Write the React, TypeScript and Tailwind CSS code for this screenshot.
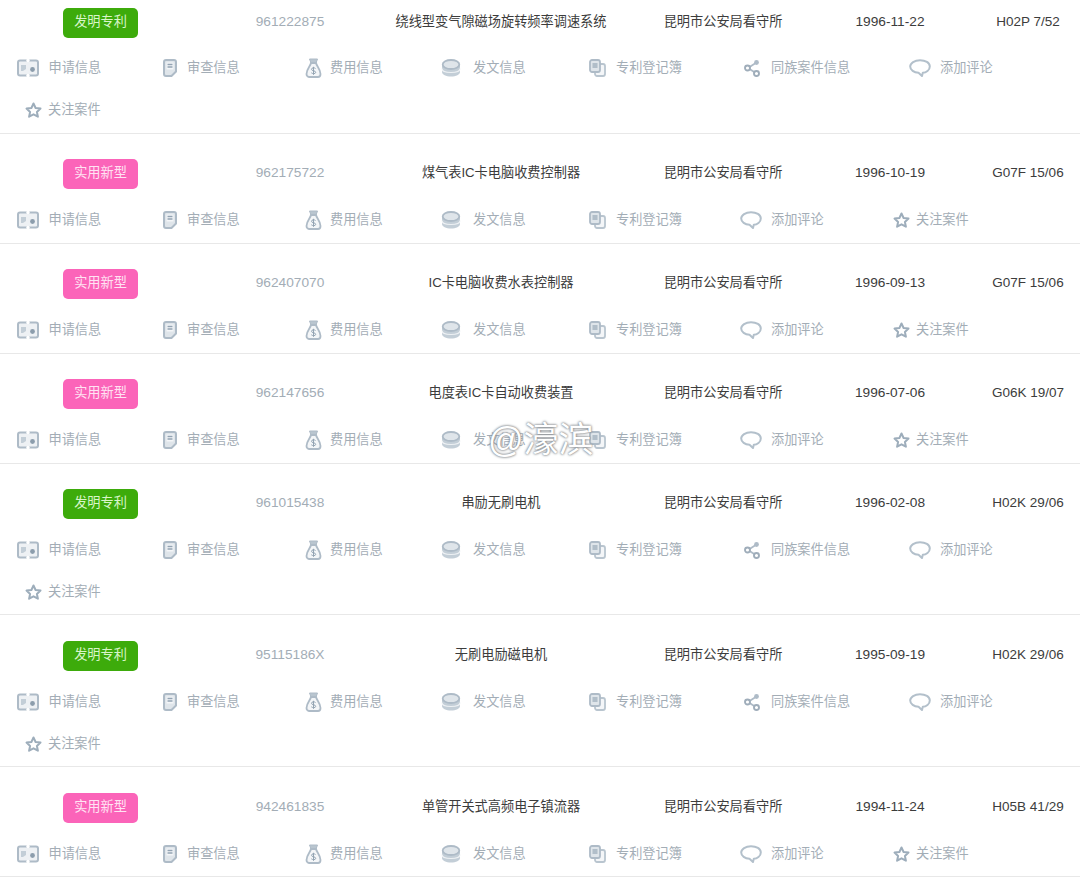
const FONT = "font-['Liberation_Sans','Noto_Sans_CJK_SC',sans-serif]";

type Patent = {
  type: "invention" | "utility";
  no: string;
  title: string;
  date: string;
  cls: string;
  pad: string;
};

const patents: Patent[] = [
  { type: "invention", no: "961222875", title: "绕线型变气隙磁场旋转频率调速系统", date: "1996-11-22", cls: "H02P 7/52", pad: "pt-2 pb-[2px]" },
  { type: "utility", no: "962175722", title: "煤气表IC卡电脑收费控制器", date: "1996-10-19", cls: "G07F 15/06", pad: "pt-[25px] pb-[2px]" },
  { type: "utility", no: "962407070", title: "IC卡电脑收费水表控制器", date: "1996-09-13", cls: "G07F 15/06", pad: "pt-[25px] pb-[2px]" },
  { type: "utility", no: "962147656", title: "电度表IC卡自动收费装置", date: "1996-07-06", cls: "G06K 19/07", pad: "pt-[25px] pb-[2px]" },
  { type: "invention", no: "961015438", title: "串励无刷电机", date: "1996-02-08", cls: "H02K 29/06", pad: "pt-[25px] pb-[1px]" },
  { type: "invention", no: "95115186X", title: "无刷电励磁电机", date: "1995-09-19", cls: "H02K 29/06", pad: "pt-[26px] pb-[1px]" },
  { type: "utility", no: "942461835", title: "单管开关式高频电子镇流器", date: "1994-11-24", cls: "H05B 41/29", pad: "pt-[26px] pb-[1px]" },
];

function AppIcon() {
  return (
    <svg width="22" height="18" viewBox="0 0 22 18">
      <rect x="1" y="1.500" width="20" height="15" rx="2" fill="#eef1f4" stroke="#aebbc7" strokeWidth="2" />
      <circle cx="11" cy="1.500" r="1.700" fill="#fff" />
      <circle cx="11" cy="16.500" r="1.700" fill="#fff" />
      <path d="M4 6h5v4l-3 2H4z" fill="#c3ced7" />
      <circle cx="15.500" cy="10.500" r="2.400" fill="#8c9dac" />
    </svg>
  );
}

function ReviewIcon() {
  return (
    <svg width="14" height="18" viewBox="0 0 14 18">
      <path d="M3 1h8a2 2 0 0 1 2 2v9.500L8.500 17H3a2 2 0 0 1-2-2V3a2 2 0 0 1 2-2z" fill="#dfe5ea" stroke="#aebbc7" strokeWidth="2" />
      <rect x="3.500" y="3.500" width="7" height="7" fill="#f4f6f8" />
      <path d="M4.500 5.500h5M4.500 8h5" stroke="#93a4b3" strokeWidth="1.300" />
    </svg>
  );
}

function FeeIcon() {
  return (
    <svg width="17" height="20" viewBox="0 0 17 20">
      <path d="M4.500 1h8L11 5H6z" fill="#b9c5cf" stroke="#aebbc7" />
      <path d="M6 5h5c.5 3 4.500 6 4.500 11 0 1.500-1 3-2.500 3H4c-1.500 0-2.500-1.500-2.500-3C1.500 11 5.500 8 6 5z" fill="#f4f6f8" stroke="#aebbc7" strokeWidth="1.800" />
      <path d="M10.500 10.500c-1-1-4-1-4 .8 0 2 4.200 1 4.200 3 0 1.700-3.200 1.700-4.400.5M8.500 8.800v8" fill="none" stroke="#93a4b3" strokeWidth="1" />
    </svg>
  );
}

function StackIcon() {
  return (
    <svg width="20" height="18" viewBox="0 0 20 18">
      <path d="M1 5v8c0 2.500 4 4.500 9 4.500s9-2 9-4.500V5z" fill="#c3ced7" />
      <path d="M1 9.500c0 2.500 4 4 9 4s9-1.500 9-4" fill="none" stroke="#eef1f4" strokeWidth="1.200" />
      <ellipse cx="10" cy="5.500" rx="8.300" ry="4.500" fill="#dfe5ea" stroke="#aebbc7" strokeWidth="1.800" />
    </svg>
  );
}

function RegisterIcon() {
  return (
    <svg width="17" height="18" viewBox="0 0 17 18">
      <rect x="6" y="5" width="10" height="12" rx="2" fill="#f4f6f8" stroke="#b9c5cf" strokeWidth="1.800" />
      <rect x="1" y="1" width="10" height="12" rx="2" fill="#dfe5ea" stroke="#aebbc7" strokeWidth="1.800" />
      <rect x="3.500" y="4" width="5" height="5" fill="#93a4b3" opacity="0.6" />
    </svg>
  );
}

function ShareIcon() {
  return (
    <svg width="16" height="18" viewBox="0 0 16 18">
      <path d="M12.500 3.500 4 9l8.500 5.500" fill="none" stroke="#aebbc7" strokeWidth="1.800" />
      <circle cx="12.500" cy="3.500" r="2.400" fill="#aebbc7" />
      <circle cx="3.500" cy="9" r="2.500" fill="#fff" stroke="#9fadba" strokeWidth="1.900" />
      <circle cx="12.500" cy="14.500" r="2.500" fill="#fff" stroke="#9fadba" strokeWidth="1.900" />
    </svg>
  );
}

function CommentIcon() {
  return (
    <svg width="22" height="18" viewBox="0 0 22 18">
      <path d="M11 1.200c5.400 0 9.800 2.600 9.800 6.300s-3.800 6.200-7 6.300L13 17l-3.500-3.300C5 13.500 1.200 11 1.200 7.500S5.600 1.200 11 1.200z" fill="#fff" stroke="#b3c0cb" strokeWidth="2" strokeLinejoin="round" />
    </svg>
  );
}

function StarIcon() {
  return (
    <svg width="17" height="17" viewBox="0 0 17 17">
      <path d="M8.500 1.500 10.600 6l4.900.6-3.600 3.300 1 4.800-4.400-2.400-4.400 2.400 1-4.800L1.500 6.600 6.400 6z" fill="#fff" stroke="#9dadbb" strokeWidth="2" strokeLinejoin="round" />
    </svg>
  );
}

function Action({ icon, label, slot, className }: { icon: React.ReactNode; label: string; slot: string; className: string }) {
  return (
    <div className={`flex h-[42px] shrink-0 items-center text-[13.2px] text-[#a3adb6] ${className}`}>
      <span className={`flex shrink-0 items-center ${slot}`}>{icon}</span>
      <span>{label}</span>
    </div>
  );
}

function Row({ item, index }: { item: Patent; index: number }) {
  const isInvention = item.type === "invention";
  return (
    <div className={`border-b border-[#e8e8e8] ${item.pad}`}>
      <div className="flex h-[30px] items-start text-center leading-[28px] text-[#3c3c3c]">
        <div className="flex w-[200px] shrink-0 justify-center pl-[1px]">
          <span className={`flex h-[30px] w-[75px] items-center justify-center rounded-[5px] pb-[3px] text-[13.2px] leading-none ${isInvention ? "bg-[#3dab0b] text-[#d9f5c9]" : "bg-[#fb64b9] text-[#ffe3f3]"}`}>
            {isInvention ? "发明专利" : "实用新型"}
          </span>
        </div>
        <div className="w-[180px] shrink-0 text-[13.7px] text-[#a3adb6]">{item.no}</div>
        <div className="w-[242px] shrink-0 text-[13.2px]">{item.title}</div>
        <div className="w-[202px] shrink-0 text-[13.2px]">昆明市公安局看守所</div>
        <div className="w-[132px] shrink-0 text-[13.7px]">{item.date}</div>
        <div className="ml-5 w-[104px] shrink-0 text-[13.5px]">{item.cls}</div>
      </div>
      <div className={`flex flex-wrap pl-[17px] ${index === 0 ? "mt-[9px]" : "mt-[10px]"}`}>
        <Action icon={<AppIcon />} label="申请信息" slot="w-[31.500px]" className="w-[146px]" />
        <Action icon={<ReviewIcon />} label="审查信息" slot="w-[24px]" className="w-[142px]" />
        <Action icon={<FeeIcon />} label="费用信息" slot="w-[25px]" className="w-[136px]" />
        <Action icon={<StackIcon />} label="发文信息" slot="w-[32px]" className="w-[148px]" />
        <Action icon={<RegisterIcon />} label="专利登记簿" slot="w-[27px]" className={isInvention ? "w-[155px]" : "w-[151px]"} />
        {isInvention && <Action icon={<ShareIcon />} label="同族案件信息" slot="w-[27px]" className="w-[165px]" />}
        <Action icon={<CommentIcon />} label="添加评论" slot="w-[31px]" className="w-[145px]" />
        <Action icon={<StarIcon />} label="关注案件" slot="w-[23px]" className="w-[85px] pl-[8px]" />
      </div>
    </div>
  );
}

export default function App() {
  return (
    <div className={`relative h-[884px] w-[1080px] overflow-hidden bg-white ${FONT}`}>
      {patents.map((item, index) => (
        <Row key={item.no} item={item} index={index} />
      ))}
      <div className="absolute left-[488px] top-[418px] text-[35px] leading-[44px] text-white [text-shadow:0_0_3px_#7d8287,0_0_2px_#7d8287]">
        @濠滨
      </div>
    </div>
  );
}
